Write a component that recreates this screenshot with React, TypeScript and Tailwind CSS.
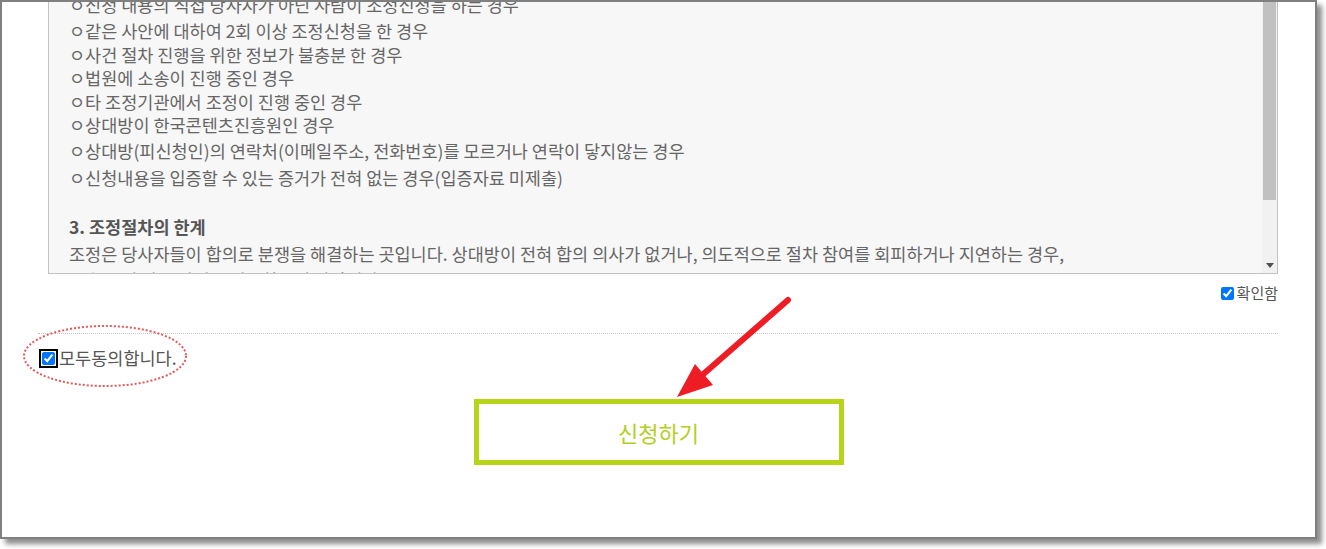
import React from "react";

const font = { fontFamily: '"Noto Sans CJK KR", "Noto Sans", sans-serif' };

export default function App() {
  return (
    <div className="relative w-[1326px] h-[549px] bg-white overflow-hidden" style={font}>
      <div className="w-[1317px] h-[539px] border-l-2 border-t-2 border-r-2 border-b-2 border-[#808080] bg-white shadow-[5px_5px_5px_rgba(0,0,0,0.45)] flex flex-col">
        {/* scrolled terms box */}
        <div className="ml-[46px] w-[1230px] h-[272px] border-l border-r border-b border-[#c3c3c3] bg-[#f7f7f7] flex overflow-hidden">
          <div className="flex-1 pl-[20px] text-[17.5px] text-[#666] overflow-hidden">
            <div className="-mt-[9px] h-[24px] leading-[24px] whitespace-nowrap">ㅇ신청 내용의 직접 당사자가 아닌 사람이 조정신청을 하는 경우</div>
            <div className="mt-[2px] h-[24px] leading-[24px] whitespace-nowrap">ㅇ같은 사안에 대하여 2회 이상 조정신청을 한 경우</div>
            <div className="h-[24px] leading-[24px] whitespace-nowrap">ㅇ사건 절차 진행을 위한 정보가 불충분 한 경우</div>
            <div className="-mt-px h-[24px] leading-[24px] whitespace-nowrap">ㅇ법원에 소송이 진행 중인 경우</div>
            <div className="h-[24px] leading-[24px] whitespace-nowrap">ㅇ타 조정기관에서 조정이 진행 중인 경우</div>
            <div className="-mt-px h-[24px] leading-[24px] whitespace-nowrap">ㅇ상대방이 한국콘텐츠진흥원인 경우</div>
            <div className="mt-[2px] h-[24px] leading-[24px] whitespace-nowrap">ㅇ상대방(피신청인)의 연락처(이메일주소, 전화번호)를 모르거나 연락이 닿지않는 경우</div>
            <div className="mt-[3px] h-[24px] leading-[24px] whitespace-nowrap">ㅇ신청내용을 입증할 수 있는 증거가 전혀 없는 경우(입증자료 미제출)</div>
            <div className="mt-[25px] h-[24px] leading-[24px] whitespace-nowrap font-bold text-[#555]">3. 조정절차의 한계</div>
            <div className="mt-[3px] h-[24px] leading-[24px] whitespace-nowrap">조정은 당사자들이 합의로 분쟁을 해결하는 곳입니다. 상대방이 전혀 합의 의사가 없거나, 의도적으로 절차 참여를 회피하거나 지연하는 경우,</div>
            <div className="mt-[2px] h-[24px] leading-[24px] whitespace-nowrap">소송 등의 다른 방법을 이용하시기 바랍니다.</div>
          </div>
          {/* scrollbar */}
          <div className="w-[15px] h-full bg-[#f1f1f1] flex flex-col">
            <div className="h-[198px] mx-[1px] bg-[#c1c1c1]" />
            <div className="flex-1" />
            <div className="h-[15px] flex items-center justify-center">
              <svg width="8" height="5" viewBox="0 0 8 5">
                <polygon points="0,0 8,0 4,5" fill="#505050" />
              </svg>
            </div>
          </div>
        </div>

        {/* 확인함 */}
        <div className="mt-[9px] w-[1276px] h-[20px] flex items-center justify-end gap-[3px] text-[15px] text-[#555]">
          <input type="checkbox" checked readOnly className="w-[13px] h-[13px] m-0 accent-[#0075ff]" />
          <span className="leading-[20px]">확인함</span>
        </div>

        {/* separator */}
        <div className="mt-[30px] ml-[36px] w-[1240px] border-t border-dotted border-[#c8c8c8]" />

        {/* 모두동의 */}
        <div className="mt-[12px] ml-[40px] h-[24px] flex items-center gap-[4px] text-[17.5px] text-[#555]">
          <input
            type="checkbox"
            checked
            readOnly
            className="w-[13px] h-[13px] m-0 accent-[#0075ff] outline-2 outline-solid outline-black outline-offset-[1px] rounded-[2px]"
          />
          <span className="leading-[24px]">모두동의합니다.</span>
        </div>

        {/* button */}
        <div className="mt-[29px] flex justify-center">
          <div className="w-[370px] h-[66px] border-[5px] border-[#b7d31a] flex items-center justify-center text-[22px] text-[#b3cf1f]">
            신청하기
          </div>
        </div>
      </div>

      {/* annotations */}
      <svg className="absolute left-0 top-0 pointer-events-none" width="1326" height="549">
        <ellipse cx="105" cy="356" rx="81" ry="30" fill="none" stroke="#e05a5a" strokeWidth="2" strokeDasharray="2 2" />
        <line x1="788" y1="300" x2="700" y2="377" stroke="#ee1c25" strokeWidth="6" strokeLinecap="round" />
        <polygon points="677,397 695,364 713,385" fill="#ee1c25" />
      </svg>
    </div>
  );
}
